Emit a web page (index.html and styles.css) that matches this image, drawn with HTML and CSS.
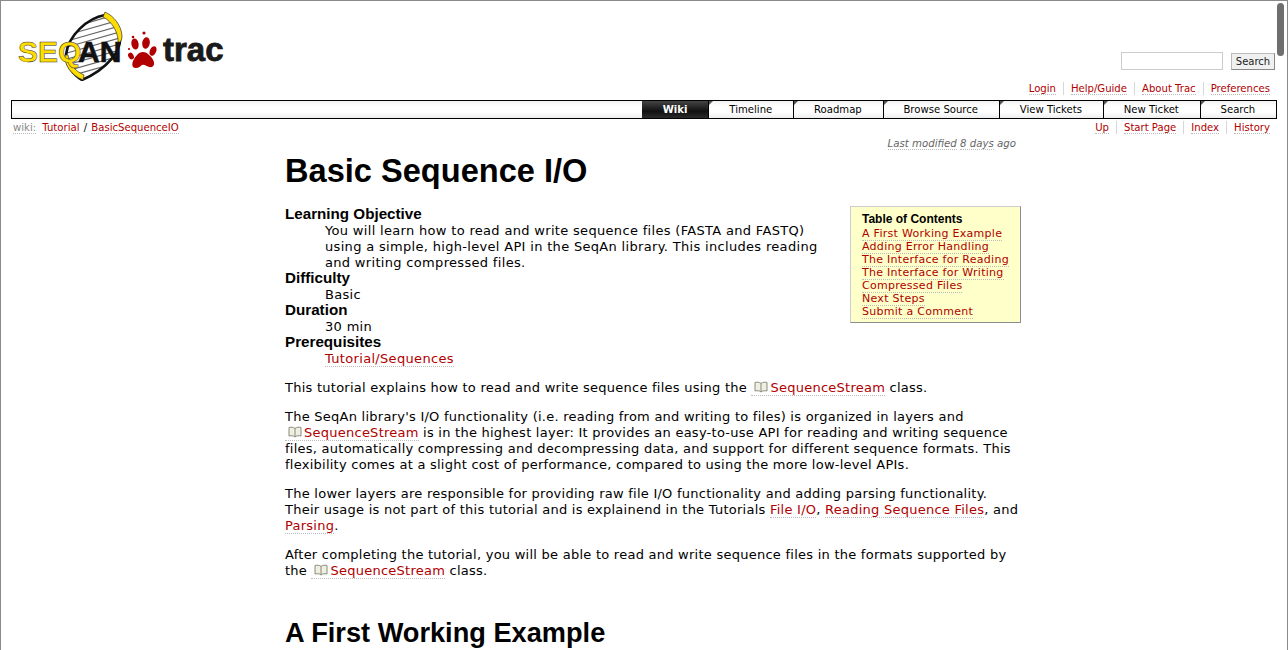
FILE: index.html
```html
<!DOCTYPE html>
<html lang="en">
<head>
    <meta charset="UTF-8">
    <title>Tutorial/BasicSequenceIO – SeqAn</title>
    <link rel="stylesheet" href="styles.css">
</head>
<body>
    <div class="frame">
        <div class="scrollthumb"></div>
        <div class="banner">
            <a class="logo" href="#">
                <svg width="212" height="72" viewBox="0 0 212 72">
                    <defs>
                        <clipPath id="helix"><path d="M88 6 C71 9 51 26 49 46 C49 56 56 66 65 71 C88 61 108 41 102 24 C99 16 93 9 88 6 Z"/></clipPath>
                    </defs>
                    <path d="M88 6 C71 9 51 26 49 46 C49 56 56 66 65 71 C88 61 108 41 102 24 C99 16 93 9 88 6 Z" fill="#fff"/>
                    <g clip-path="url(#helix)" stroke="#666" stroke-width="1.3">
                        <path d="M50 20 L104 4"/><path d="M50 26 L106 10"/><path d="M50 32 L106 16"/><path d="M50 38 L106 22"/>
                        <path d="M50 44 L106 28"/><path d="M50 50 L106 34"/><path d="M46 57 L106 40"/><path d="M46 63 L106 46"/>
                        <path d="M46 69 L106 52"/>
                    </g>
                    <path d="M88 6 C71 9 51 26 49 46 C49 56 56 66 65 71 C88 61 108 41 102 24 C99 16 93 9 88 6 Z" fill="none" stroke="#111" stroke-width="2.6"/>
                    <path d="M88 3 C97 7 105 17 105 28 C105 31 103 33 101 35 C102 25 96 13 86 8 Z" fill="#fd0" stroke="#333" stroke-width=".7"/>
                    <path d="M48 46 C47 56 54 66 66 71 L67 66 C58 62 52 55 51 46 Z" fill="#fd0" stroke="#333" stroke-width=".7"/>
                    <text class="logo-an" x="61" y="53">AN</text>
                    <text class="logo-seq" x="1" y="53">SEQ</text>
                    <g fill="#b00000">
                        <path d="M119 59 C113 59 115 51 120 46 C123 42 129 42 132 46 C137 50 139 56 135 58 C131 59 128 55 125 56 C123 57 122 59 119 59 Z"/>
                        <ellipse cx="114" cy="47" rx="2.6" ry="3.6" transform="rotate(-30 114 47)"/>
                        <ellipse cx="118" cy="35" rx="3.6" ry="5.6" transform="rotate(-12 118 35)"/>
                        <ellipse cx="129" cy="34" rx="3.8" ry="5.8" transform="rotate(10 129 34)"/>
                        <ellipse cx="136" cy="42" rx="3.2" ry="5" transform="rotate(25 136 42)"/>
                        <circle cx="127" cy="24" r="1.6"/><circle cx="116" cy="28" r="1.3"/><circle cx="112" cy="40" r="1.1"/>
                    </g>
                    <text class="logo-trac" x="146" y="52">trac</text>
                </svg>
            </a>
            <form class="search">
                <input class="search-box" type="text">
                <button class="search-btn" type="button">Search</button>
            </form>
        </div>
        <ul class="metanav">
            <li><a href="#">Login</a></li>
            <li><a href="#">Help/Guide</a></li>
            <li><a href="#">About Trac</a></li>
            <li><a href="#">Preferences</a></li>
        </ul>
        <ul class="mainnav">
            <li class="active"><a href="#">Wiki</a></li>
            <li><a href="#">Timeline</a></li>
            <li><a href="#">Roadmap</a></li>
            <li><a href="#">Browse Source</a></li>
            <li><a href="#">View Tickets</a></li>
            <li><a href="#">New Ticket</a></li>
            <li><a href="#">Search</a></li>
        </ul>
        <div class="ctxt">
            <div class="path"><a class="wikilabel" href="#">wiki:</a> <a href="#">Tutorial</a> <span class="sep">/</span> <a href="#">BasicSequenceIO</a></div>
            <ul class="ctxtnav">
                <li><a href="#">Up</a></li>
                <li><a href="#">Start Page</a></li>
                <li><a href="#">Index</a></li>
                <li><a href="#">History</a></li>
            </ul>
        </div>
        <div class="content">
            <p class="lastmod"><a href="#">Last modified</a> <a href="#">8 days</a> ago</p>
            <h1>Basic Sequence I/O</h1>
            <div class="toc">
                <h4>Table of Contents</h4>
                <ol>
                    <li><a href="#">A First Working Example</a></li>
                    <li><a href="#">Adding Error Handling</a></li>
                    <li><a href="#">The Interface for Reading</a></li>
                    <li><a href="#">The Interface for Writing</a></li>
                    <li><a href="#">Compressed Files</a></li>
                    <li><a href="#">Next Steps</a></li>
                    <li><a href="#">Submit a Comment</a></li>
                </ol>
            </div>
            <dl>
                <dt>Learning Objective</dt>
                <dd>You will learn how to read and write sequence files (FASTA and FASTQ) using a simple, high-level API in the SeqAn library. This includes reading and writing compressed files.</dd>
                <dt>Difficulty</dt>
                <dd>Basic</dd>
                <dt>Duration</dt>
                <dd>30 min</dd>
                <dt>Prerequisites</dt>
                <dd><a href="#">Tutorial/Sequences</a></dd>
            </dl>
            <p>This tutorial explains how to read and write sequence files using the <a class="ext" href="#"><svg class="book" viewBox="0 0 14 12"><path d="M7 2.5 C5.5 1 3 1 1 1.5 V10 C3 9.5 5.5 9.5 7 11 C8.5 9.5 11 9.5 13 10 V1.5 C11 1 8.5 1 7 2.5 Z M7 2.5 V11"/></svg>SequenceStream</a> class.</p>
            <p>The SeqAn library's I/O functionality (i.e. reading from and writing to files) is organized in layers and <a class="ext" href="#"><svg class="book" viewBox="0 0 14 12"><path d="M7 2.5 C5.5 1 3 1 1 1.5 V10 C3 9.5 5.5 9.5 7 11 C8.5 9.5 11 9.5 13 10 V1.5 C11 1 8.5 1 7 2.5 Z M7 2.5 V11"/></svg>SequenceStream</a> is in the highest layer: It provides an easy-to-use API for reading and writing sequence files, automatically compressing and decompressing data, and support for different sequence formats. This flexibility comes at a slight cost of performance, compared to using the more low-level APIs.</p>
            <p>The lower layers are responsible for providing raw file I/O functionality and adding parsing functionality. Their usage is not part of this tutorial and is explainend in the Tutorials <a href="#">File I/O</a>, <a href="#">Reading Sequence Files</a>, and <a href="#">Parsing</a>.</p>
            <p>After completing the tutorial, you will be able to read and write sequence files in the formats supported by the <a class="ext" href="#"><svg class="book" viewBox="0 0 14 12"><path d="M7 2.5 C5.5 1 3 1 1 1.5 V10 C3 9.5 5.5 9.5 7 11 C8.5 9.5 11 9.5 13 10 V1.5 C11 1 8.5 1 7 2.5 Z M7 2.5 V11"/></svg>SequenceStream</a> class.</p>
            <h2>A First Working Example</h2>
        </div>
    </div>
</body>
</html>
```
FILE: styles.css
```css
*{
    box-sizing:border-box;
}
html,body{
    margin:0;
    padding:0;
    height:650px;
    overflow:hidden;
    background:#fff;
}
body{
    font-family:"DejaVu Sans","Liberation Sans",sans-serif;
    font-size:13px;
    letter-spacing:.25px;
    line-height:16px;
    color:#000;
}
a{
    color:#b00000;
    text-decoration:none;
    border-bottom:1px dotted #bbb;
}
ul,ol{
    list-style:none;
    margin:0;
    padding:0;
}
.frame{
    position:relative;
    height:650px;
    overflow:hidden;
    border:1px solid #8a8a8a;
    border-bottom:0;
    padding:0 10px;
}
.scrollthumb{
    position:absolute;
    top:2px;
    right:3px;
    width:7px;
    height:53px;
    border-radius:4px;
    background:#6f6f6f;
}

/* banner */
.banner{
    display:flex;
    justify-content:space-between;
    align-items:flex-end;
    height:69px;
    padding-left:6px;
    padding-right:2px;
}
.logo{
    border:0;
    display:block;
    height:72px;
    margin-top:8px;
    align-self:flex-start;
}
.logo-seq{
    font:bold 30px "Liberation Sans",sans-serif;
    letter-spacing:0;
    fill:#fd0;
    stroke:#333;
    stroke-width:.5px;
}
.logo-an{
    font:bold 30px "Liberation Sans",sans-serif;
    letter-spacing:0;
    fill:#111;
    stroke:#111;
    stroke-width:.6px;
}
.logo-trac{
    font:bold 33px "Liberation Sans",sans-serif;
    letter-spacing:0;
    fill:#1a1a1a;
    stroke:#1a1a1a;
    stroke-width:.8px;
}
.search{
    display:flex;
    gap:8px;
    align-items:center;
    margin:0;
}
.search-box{
    width:102px;
    height:18px;
    border:1px solid #ccc;
    background:#fff;
    padding:0;
}
.search-btn{
    width:44px;
    height:17px;
    padding:0;
    font:10px "DejaVu Sans",sans-serif;
    color:#222;
    background:#f0f0f0;
    border:1px solid #bbb;
    border-bottom-color:#888;
    border-right-color:#888;
}

/* nav */
.metanav,.ctxtnav{
    display:flex;
    justify-content:flex-end;
    font-size:10.1px;
    letter-spacing:0;
    line-height:13px;
}
.metanav{
    margin-top:12px;
    padding-right:7px;
}
.metanav li,.ctxtnav li{
    padding:0 7px;
    border-left:1px solid #d7d7d7;
}
.metanav li:first-child,.ctxtnav li:first-child{
    border-left:0;
}
.metanav li:last-child,.ctxtnav li:last-child{
    padding-right:0;
}
.mainnav{
    display:flex;
    justify-content:flex-end;
    height:19px;
    margin-top:5px;
    border:1px solid #000;
    background:linear-gradient(#f0f0f0,#fff 30%,#fff 65%,#ededed);
    font-size:10.1px;
    letter-spacing:0;
    line-height:17px;
}
.mainnav li{
    position:relative;
    border-left:1px solid #000;
    padding:0 20.8px 0 19.9px;
    text-align:center;
}
.mainnav li::before{
    content:"";
    position:absolute;
    top:0;
    left:0;
    border-top:4px solid #555;
    border-right:4px solid transparent;
}
.mainnav a{
    color:#000;
    border:0;
}
.mainnav .active{
    background:linear-gradient(#444,#111 60%,#2a2a2a);
    border-left:0;
    padding:0 21px;
}
.mainnav .active::before{
    display:none;
}
.mainnav .active a{
    color:#fff;
    font-weight:bold;
}
.ctxt{
    display:flex;
    justify-content:space-between;
    font-size:10.1px;
    letter-spacing:0;
    line-height:13px;
    margin-top:2px;
    padding:0 7px 0 2px;
}
.wikilabel{
    color:#888;
    margin-right:3px;
}
.sep{
    margin:0 1px;
}

/* content */
.content{
    width:736px;
    margin-left:274px;
}
.lastmod{
    margin:3px 0 0;
    font-size:10.2px;
    letter-spacing:0;
    line-height:13px;
    font-style:italic;
    color:#666;
    text-align:right;
    padding-right:5px;
}
.lastmod a{
    color:#666;
}
h1,h2,h4,dt{
    font-family:"Liberation Sans",sans-serif;
    font-weight:bold;
    letter-spacing:0;
}
h1{
    font-size:32.6px;
    line-height:36px;
    margin:3px 0 17px;
}
h2{
    font-size:27.2px;
    line-height:32px;
    margin:38px 0 0;
}
.toc{
    float:right;
    width:171px;
    height:117px;
    margin:0 0 0 28px;
    padding:4px 11px;
    background:#ffffc9;
    border:1px solid #ccc;
    border-right-color:#8d8d8d;
    border-bottom-color:#8d8d8d;
    font-size:11px;
    letter-spacing:.28px;
    line-height:13px;
}
.toc h4{
    font-size:12px;
    line-height:16px;
    margin:0;
}
dl{
    margin:0 0 14px;
}
dt{
    font-size:15.2px;
}
dd{
    margin:0 0 -1px 40px;
    padding-top:1px;
    letter-spacing:.32px;
}
p{
    margin:13px 0;
}
.ext{
    white-space:nowrap;
}
.book{
    width:14px;
    height:12px;
    margin:0 2px -1px 3px;
    fill:#efefe2;
    stroke:#8a8a7a;
    stroke-width:1;
}
```
